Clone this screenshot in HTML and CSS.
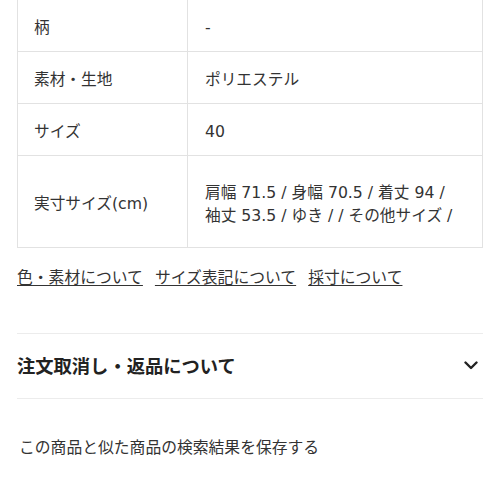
FILE: index.html
```html
<!DOCTYPE html>
<html lang="ja">

<head>
  <meta charset="UTF-8">
  <meta name="viewport" content="width=device-width, initial-scale=1.0">
  <title>商品詳細</title>
  <link rel="stylesheet" href="styles.css">
</head>

<body>
  <div class="detail">
    <table class="spec">
      <tr class="spec__row spec__row--first">
        <th>柄</th>
        <td>-</td>
      </tr>
      <tr class="spec__row">
        <th>素材・生地</th>
        <td>ポリエステル</td>
      </tr>
      <tr class="spec__row">
        <th>サイズ</th>
        <td>40</td>
      </tr>
      <tr class="spec__row spec__row--tall">
        <th>実寸サイズ(cm)</th>
        <td>肩幅 71.5 / 身幅 70.5 / 着丈 94 /<br>袖丈 53.5 / ゆき / / その他サイズ /</td>
      </tr>
    </table>

    <div class="guides">
      <a href="#" class="guides__link">色・素材について</a>
      <a href="#" class="guides__link">サイズ表記について</a>
      <a href="#" class="guides__link">採寸について</a>
    </div>

    <div class="accordion">
      <span class="accordion__title">注文取消し・返品について</span>
      <svg class="accordion__icon" width="14" height="9" viewBox="0 0 14 9">
        <path d="M1.5 1.5 L7 7 L12.5 1.5" fill="none" stroke="#222" stroke-width="2.4" stroke-linecap="round" stroke-linejoin="round" />
      </svg>
    </div>

    <p class="save">この商品と似た商品の検索結果を保存する</p>
  </div>
</body>

</html>
```

FILE: styles.css
```css
* {
  margin: 0;
  padding: 0;
  box-sizing: border-box;
}

body {
  background: #fff;
  color: #333;
  font-family: "DejaVu Sans", "Noto Sans CJK JP", sans-serif;
  overflow: hidden;
}

.detail {
  padding: 0 17px 0 17px;
  width: 500px;
}

/* ============= 商品スペック ============= */
.spec {
  width: 466px;
  margin-top: -2px;
  border-collapse: collapse;
  border: 1px solid #e2e2e2;
  font-size: 15.7px;
}

.spec th,
.spec td {
  border: 1px solid #e2e2e2;
  text-align: left;
  vertical-align: middle;
  font-weight: 400;
  line-height: 23px;
  padding-top: 4px;
}

.spec th {
  width: 170px;
  padding-left: 16px;
}

.spec td {
  padding-left: 17px;
}

.spec__row {
  height: 52px;
}

.spec__row--first {
  height: 53px;
}

.spec__row--tall {
  height: 92px;
}

/* ============= ガイドリンク ============= */
.guides {
  display: flex;
  gap: 12px;
  margin-top: 17px;
  line-height: 24px;
  font-size: 15.8px;
  padding-top: 1px;
}

.guides__link {
  color: #333;
  text-decoration: underline;
  text-underline-offset: 2px;
  text-decoration-thickness: 1px;
}

/* ============= アコーディオン ============= */
.accordion {
  display: flex;
  justify-content: space-between;
  align-items: center;
  margin-top: 43px;
  height: 66px;
  border-top: 1px solid #ececec;
  border-bottom: 1px solid #ececec;
  padding-right: 5px;
  padding-bottom: 2px;
}

.accordion__title {
  color: #222;
  font-size: 18.3px;
  font-weight: 700;
}

/* ============= 保存 ============= */
.save {
  margin-top: 37px;
  font-size: 15.8px;
  line-height: 24px;
  padding-left: 2px;
}
```
